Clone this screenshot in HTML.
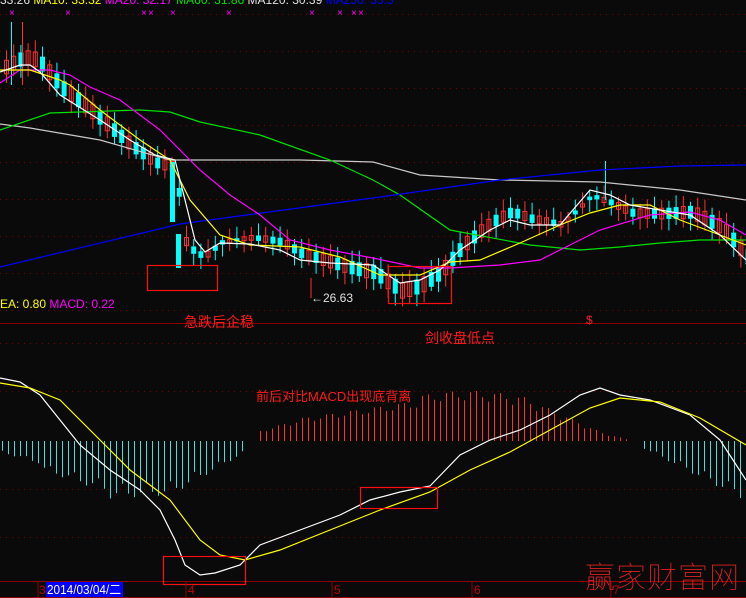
<!DOCTYPE html><html><head><meta charset="utf-8"><style>
html,body{margin:0;padding:0;background:#0a0a0a;width:746px;height:598px;overflow:hidden}
svg{display:block}
text{font-family:"Liberation Sans","Noto Sans CJK SC",sans-serif}
</style></head><body>
<svg id="s" width="746" height="598" xmlns="http://www.w3.org/2000/svg">
<rect width="746" height="598" fill="#0a0a0a"/>
<g stroke="#7a0000" stroke-dasharray="1 5" stroke-width="1">
<line x1="0" y1="14.5" x2="746" y2="14.5"/><line x1="0" y1="51.5" x2="746" y2="51.5"/><line x1="0" y1="88.5" x2="746" y2="88.5"/><line x1="0" y1="125.5" x2="746" y2="125.5"/><line x1="0" y1="162.5" x2="746" y2="162.5"/><line x1="0" y1="199.5" x2="746" y2="199.5"/><line x1="0" y1="236.5" x2="746" y2="236.5"/><line x1="0" y1="273.5" x2="746" y2="273.5"/><line x1="0" y1="310.5" x2="746" y2="310.5"/><line x1="0" y1="343.5" x2="746" y2="343.5"/><line x1="0" y1="391.5" x2="746" y2="391.5"/><line x1="0" y1="489.5" x2="746" y2="489.5"/><line x1="0" y1="537.5" x2="746" y2="537.5"/>
</g>
<line x1="0" y1="323.5" x2="746" y2="323.5" stroke="#8a0000"/>
<line x1="0" y1="581.5" x2="746" y2="581.5" stroke="#8a0000"/>
<line x1="0" y1="597.5" x2="746" y2="597.5" stroke="#8a0000"/>
<g id="bars"></g>
<g id="candles"></g>
<g fill="none" stroke-width="1.2">
<polyline stroke="#c8c8c8" points="0,124 30,128 100,140 170,160 300,160 373,162 420,175 500,180 600,182 680,190 746,200"/>
<polyline stroke="#00e000" points="0,130 50,113 140,110 170,112 200,122 260,135 330,160 373,180 400,195 450,230 530,245 580,250 620,247 660,243 700,240 746,240"/>
<polyline stroke="#0000ff" points="0,267 180,224 373,198 500,180 600,170 680,166 746,165"/>
<polyline stroke="#ff00ff" points="0,83 20,70 50,70 70,75 90,87 120,100 160,130 200,170 230,195 260,215 290,240 330,250 373,258 420,268 450,268 500,265 540,260 570,245 600,230 650,215 690,212 720,220 746,235"/>
<polyline stroke="#ffff00" points="0,70 30,70 45,75 60,80 70,85 100,110 140,140 170,160 190,200 220,235 250,245 300,247 340,257 380,275 420,275 450,262 480,260 520,243 560,225 590,213 620,205 650,205 680,220 720,235 746,245"/>
<polyline stroke="#ffffff" points="0,72 20,65 30,65 40,72 60,95 100,120 130,140 155,155 175,160 185,200 195,240 205,252 220,243 250,244 280,250 300,260 330,263 373,265 400,283 420,280 440,270 460,250 490,230 510,220 530,225 560,225 590,190 610,195 630,205 660,210 690,215 720,235 746,260"/>
<polyline stroke="#ffffff" points="0,378 20,382 40,395 60,420 80,445 110,470 140,490 160,510 175,540 185,565 200,575 215,573 240,565 260,545 300,530 340,515 370,500 400,492 430,486 460,455 490,440 520,430 550,415 580,395 600,388 620,395 650,400 690,415 720,440 746,480"/>
<polyline stroke="#ffff00" points="0,383 30,388 60,400 90,430 130,470 170,500 200,540 220,555 245,560 280,550 330,530 380,510 430,492 470,470 510,452 550,430 590,408 620,398 660,402 700,418 746,445"/>
</g>
<g fill="none" stroke="#ff1010" stroke-width="1.2">
<rect x="147.5" y="265.5" width="70" height="25"/><rect x="388.5" y="266.5" width="63" height="37"/>
<rect x="163.5" y="556.5" width="82" height="28"/><rect x="360.5" y="487.5" width="77" height="21"/>
</g>
<line x1="311" y1="278" x2="311" y2="298" stroke="#ff3030"/>
<text x="311" y="302" fill="#e0e0e0" font-size="12">←26.63</text>
<g font-size="14" fill="#ff1a1a">
<text x="184" y="327">急跌后企稳</text>
<text x="425" y="343">剑收盘低点</text>
<text x="586" y="324" font-size="12">$</text>
<text x="256" y="401" font-size="13">前后对比MACD出现底背离</text>
</g>
<g font-size="12">
<text x="0" y="4" fill="#e0e0e0">33.26 <tspan fill="#ffff00">MA10: 33.32</tspan> <tspan fill="#ff00ff">MA20: 32.17</tspan> <tspan fill="#00e000">MA60: 31.86</tspan> <tspan fill="#e0e0e0">MA120: 30.39</tspan> <tspan fill="#0000ff">MA250: 33.3</tspan></text>
<text x="0" y="308" fill="#ffff00">EA: 0.80 <tspan fill="#ff00ff">MACD: 0.22</tspan></text>
</g>
<g fill="#ff00ff" font-size="10"><text x="9" y="16">×</text><text x="65" y="16">×</text><text x="141" y="16">×</text><text x="148" y="16">×</text><text x="170" y="16">×</text><text x="226" y="16">×</text><text x="309" y="16">×</text><text x="337" y="16">×</text><text x="351" y="16">×</text><text x="358" y="16">×</text></g>
<g stroke="#8a0000"><line x1="38" y1="582" x2="38" y2="597"/><line x1="186" y1="582" x2="186" y2="597"/><line x1="332" y1="582" x2="332" y2="597"/><line x1="472" y1="582" x2="472" y2="597"/><line x1="611" y1="582" x2="611" y2="597"/></g>
<g fill="#c00000" font-size="12"><text x="39" y="594">3</text><text x="188" y="594">4</text><text x="334" y="594">5</text><text x="474" y="594">6</text><text x="613" y="594">7</text></g>
<rect x="46" y="582" width="77" height="15" fill="#0000ff"/>
<text x="47" y="594" fill="#ffffff" font-size="13" textLength="74" lengthAdjust="spacingAndGlyphs">2014/03/04/二</text>
<text x="585" y="588" fill="#e02020" font-size="30" font-family="'Noto Sans CJK SC',sans-serif" font-weight="100" letter-spacing="1">赢家财富网</text>
</svg>
<script>
var ns="http://www.w3.org/2000/svg";
function el(p,t,a){var e=document.createElementNS(ns,t);for(var k in a)e.setAttribute(k,a[k]);p.appendChild(e);}
(function(){
var bars=document.getElementById("bars");
function env(x){
 if(x<40)return -(10+x/4);
 if(x<110)return -(25+(x-40)*0.3);
 if(x<175)return -(50-(x-110)*0.05);
 if(x<245)return -(45-(x-175)*0.5);
 if(x<255)return 0;
 if(x<300)return 8+(x-255)*0.25;
 if(x<420)return 20+(x-300)*0.13;
 if(x<520)return 40+Math.sin((x-420)/30)*4;
 if(x<600)return 40-(x-520)*0.4;
 if(x<630)return 8-(x-600)*0.25;
 if(x<640)return 0;
 return -(5+(x-640)*0.45);
}
for(var x=2;x<746;x+=6){var h=env(x)*(0.85+0.3*Math.abs(Math.sin(x*1.7)));if(Math.abs(h)<1)continue;
 el(bars,"line",{x1:x+.5,x2:x+.5,y1:441,y2:441-h,stroke:h>0?"#ff3030":"#40e0e0","stroke-width":1});}
var path=[[0,72],[20,65],[30,65],[40,72],[60,95],[100,120],[130,140],[155,155],[175,160],[180,230],[195,250],[205,252],[220,243],[250,244],[280,250],[300,260],[330,263],[373,265],[400,283],[420,280],[440,270],[460,250],[490,230],[510,220],[530,225],[560,225],[590,190],[610,195],[630,205],[660,210],[690,215],[720,235],[746,265]];
function py(x){for(var i=1;i<path.length;i++)if(x<=path[i][0]){var a=path[i-1],b=path[i];return a[1]+(b[1]-a[1])*(x-a[0])/(b[0]-a[0]);}return 265;}
var cg=document.getElementById("candles");
for(var x=4;x<746;x+=7.2){var c=py(x)+Math.sin(x*0.9)*8;var up=Math.sin(x*2.3)>0;var bh=3+Math.abs(Math.sin(x*1.3))*12;
 var tp=c-bh/2,col=up?"#ff3030":"#00ffff";
 el(cg,"line",{x1:x+2.5,x2:x+2.5,y1:tp-4-Math.abs(Math.sin(x))*8,y2:tp+bh+4+Math.abs(Math.cos(x))*8,stroke:col});
 if(up)el(cg,"rect",{x:x+.5,y:tp,width:4,height:bh,fill:"none",stroke:col});else el(cg,"rect",{x:x,y:tp,width:5,height:bh,fill:col});}
el(cg,"rect",{x:170,y:162,width:5,height:60,fill:"#00ffff"});
el(cg,"rect",{x:176,y:234,width:5,height:34,fill:"#00ffff"});
el(cg,"line",{x1:605.5,x2:605.5,y1:161,y2:200,stroke:"#00ffff"});
el(cg,"line",{x1:22.5,x2:22.5,y1:22,y2:85,stroke:"#ff3030"});
el(cg,"line",{x1:11.5,x2:11.5,y1:22,y2:85,stroke:"#00ffff"});
})();
</script>
</body></html>
